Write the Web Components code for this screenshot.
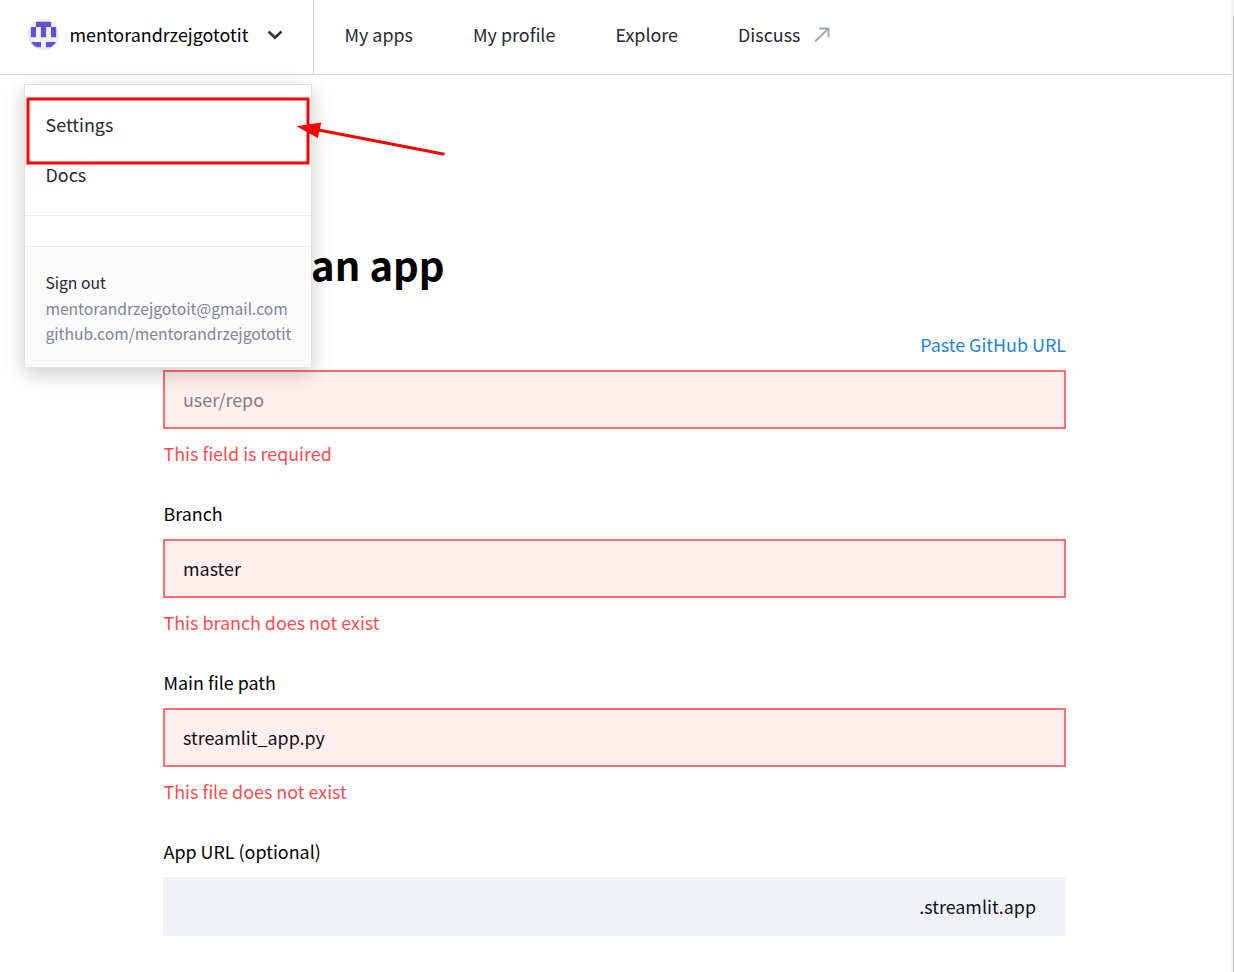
<!DOCTYPE html>
<html lang="en"><head><meta charset="utf-8"><title>Deploy an app</title>
<style>
html,body{margin:0;height:972px;overflow:hidden;background:#fff}
body{font-family:"Noto Sans CJK SC","Noto Sans",sans-serif;font-size:17.9px;color:#000}
</style></head><body><deploy-page></deploy-page>
<script>
const define=(name,html)=>customElements.define(name,class extends HTMLElement{
  constructor(){super();const t=document.createElement('template');t.innerHTML=html;this.attachShadow({mode:'open'}).append(t.content.cloneNode(true));}
});
define('user-avatar',`<style>:host{display:block;width:31px;height:31px}svg{display:block}</style>
<svg width="31" height="31" viewBox="0 0 31 31"><defs><clipPath id="c"><circle cx="15.5" cy="15.5" r="15.3"/></clipPath></defs>
<g clip-path="url(#c)"><path fill="#f0f0f0" d="M0 0h31v31H0z"/><path fill="#644ed8" d="M7.900 2.800h15.200v5.200h5.100v10.200h-5.200V8h-4.900v10.200h-5.200V8H8v10.200H2.800V8h5.100zM2.800 23h10.200v5.200H2.800zM18 23h10.200v5.200H18z"/></g><circle cx="15.5" cy="15.5" r="15" fill="none" stroke="#e4e4e8"/></svg>`);
define('user-switcher',`<style>:host{display:flex;box-sizing:border-box;width:314px;height:74px;border-right:1px solid #d5d5e5;padding:0 0 5px 28px;align-items:center}
span{margin-left:10.500px;line-height:28px;padding-bottom:2px;width:179px;white-space:nowrap}svg{margin-left:18.500px}</style>
<user-avatar></user-avatar><span><slot></slot></span><svg width="16" height="12" viewBox="0 0 16 12"><path d="M1.500 2.500L8 8.700l6.500-6.200" fill="none" stroke="#31333f" stroke-width="2.600"/></svg>`);
define('nav-link',`<style>:host{display:flex;align-items:center;gap:14px;line-height:28px;color:#262730;white-space:nowrap}</style><slot></slot>`);
define('app-header',`<style>:host{display:flex;height:74px;border-bottom:1px solid #d5d5e5}
nav{display:flex;padding:0 0 7px 30.500px;gap:60.100px;align-items:center}svg{margin-top:2px}</style>
<user-switcher>mentorandrzejgototit</user-switcher><nav><nav-link>My apps</nav-link><nav-link>My profile</nav-link><nav-link>Explore</nav-link><nav-link>Discuss<svg width="16" height="16" viewBox="0 0 16 16"><path d="M1 14.500L14.500 1.500M5 1.500h9.500v9" fill="none" stroke="#a3a8b8" stroke-width="1.900"/></svg></nav-link></nav>`);
define('account-menu',`<style>:host{display:block;box-sizing:border-box;width:288px;height:284px;background:#fff;border:1px solid #dde1ea;box-shadow:0 6px 20px rgba(0,0,0,.2);color:#262730}
.items{height:131px;box-sizing:border-box;padding:14px 20px 0 20.500px;border-bottom:1px solid #e9ecf2;line-height:50px}
.gap{height:30px;border-bottom:1px solid #e9ecf2}
.account{height:120px;box-sizing:border-box;padding:23px 0 0 20.400px;background:#fafafa;font-size:15.660px;line-height:25.500px;white-space:nowrap;color:#808495}
.out{color:#262730}</style>
<div class="items"><div>Settings</div><div>Docs</div></div><div class="gap"></div>
<div class="account"><div class="out">Sign out</div><div>mentorandrzejgotoit@gmail.com</div><div>github.com/mentorandrzejgototit</div></div>`);
define('form-field',`<style>:host{display:block;height:169px}
.label{display:flex;justify-content:space-between;box-sizing:border-box;height:39px;line-height:26px;padding-left:.5px}
.box{box-sizing:border-box;height:59px;border:2px solid #ff6c6c;background:#ffefef;padding:0 18px;line-height:54px;color:#0e1117}
.error{line-height:28px;margin-top:10px;padding-left:.5px;color:#ff4b4b}
:host([hint]) .box{color:#808080}
:host([plain]) .box{border:0;background:#f0f2f6;line-height:58px;text-align:right;padding-right:30px}
::slotted([slot=action]){color:#1c83e1}</style>
<div class="label"><slot name="label"></slot><slot name="action"></slot></div><div class="box"><slot></slot></div><div class="error"><slot name="error"></slot></div>`);
define('red-callout',`<style>:host{display:block;width:420px;height:70px}svg{display:block}</style>
<svg width="420" height="70" viewBox="26 96 420 70"><rect x="28" y="99" width="280" height="64" fill="none" stroke="#f00" stroke-width="3"/><path d="M316 129.500L444.500 154.300" stroke="#f00" stroke-width="3"/><path fill="#f00" d="M296.500 126.300L321.300 122.500L317.800 138z"/></svg>`);
define('page-scrollbar',`<style>:host{display:block;width:3px;background:#f1f1f1;padding-top:16px;box-sizing:border-box;height:972px}div{height:956px;margin-left:2px;background:#c1c1c1}</style><div></div>`);
define('deploy-page',`<style>:host{display:flex;position:relative;width:1234px;height:972px;overflow:hidden}
main{width:1231px}.form{width:903px;margin-left:163px;padding-top:159px}
h1{margin:0 0 37px 1.200px;font-size:40px;line-height:60px;font-weight:700;white-space:nowrap}
.covered{visibility:hidden}
account-menu{position:absolute;left:24px;top:84px}red-callout{position:absolute;left:26px;top:96px}
</style><main><app-header></app-header><section class="form"><h1><span class="covered">Deploy </span>an app</h1>
<form-field hint><span slot="label" class="covered">Repository</span><span slot="action">Paste GitHub URL</span><span>user/repo</span><span slot="error">This field is required</span></form-field>
<form-field><span slot="label">Branch</span><span>master</span><span slot="error">This branch does not exist</span></form-field>
<form-field><span slot="label">Main file path</span><span>streamlit_app.py</span><span slot="error">This file does not exist</span></form-field>
<form-field plain><span slot="label">App URL (optional)</span><span>.streamlit.app</span></form-field>
</section></main><page-scrollbar></page-scrollbar><account-menu></account-menu><red-callout></red-callout>`);
</script></body></html>
